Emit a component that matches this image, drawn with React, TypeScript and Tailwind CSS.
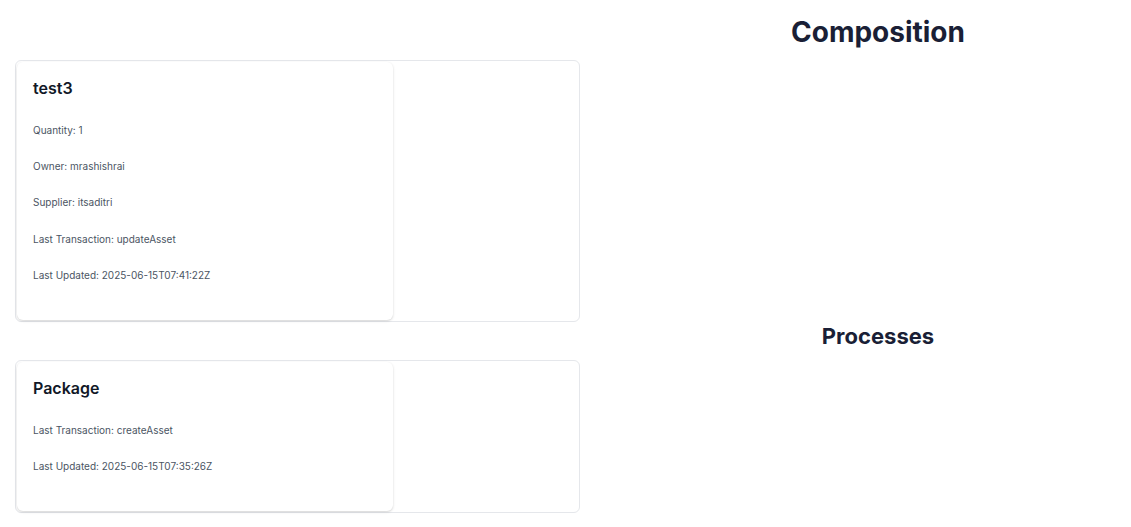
const assets = [
  {
    name: "test3",
    fields: [
      "Quantity: 1",
      "Owner: mrashishrai",
      "Supplier: itsaditri",
      "Last Transaction: updateAsset",
      "Last Updated: 2025-06-15T07:41:22Z",
    ],
  },
  {
    name: "Package",
    fields: ["Last Transaction: createAsset", "Last Updated: 2025-06-15T07:35:26Z"],
  },
];

const AssetCard = ({ name, fields }: { name: string; fields: string[] }) => {
  return (
    <div className="w-[376px] rounded-md bg-white px-4 pt-[14px] pb-[26.3px] shadow-[0_1px_3px_rgba(0,0,0,0.12),0_1px_2px_rgba(0,0,0,0.06)]">
      <h3 className="text-[16px] leading-6 font-semibold text-[#111827]">{name}</h3>
      <div className="mt-3 flex flex-col">
        {fields.map((f) => (
          <p key={f} className="flex h-[36.34px] items-center text-[10px] text-[#4b5563]">
            {f}
          </p>
        ))}
      </div>
    </div>
  );
};

export default function App() {
  return (
    <div
      className="grid min-h-[527px] grid-cols-[580px_1fr] bg-white"
      style={{ fontFamily: "Inter, 'Noto Sans', sans-serif" }}
    >
      {/* asset list */}
      <div className="flex flex-col gap-[38px] pt-[60px] pl-[15px]">
        {assets.map((a) => (
          <div key={a.name} className="rounded-md border border-[#e5e7eb] p-px">
            <AssetCard name={a.name} fields={a.fields} />
          </div>
        ))}
      </div>
      {/* right side */}
      <div className="flex flex-col items-center pl-[45px] pt-[14px]">
        <h2 className="text-[28px] leading-9 font-bold text-[#1a1f36]">Composition</h2>
        <h2 className="mt-[270px] text-[22px] leading-8 font-bold text-[#1a1f36]">Processes</h2>
      </div>
    </div>
  );
}
